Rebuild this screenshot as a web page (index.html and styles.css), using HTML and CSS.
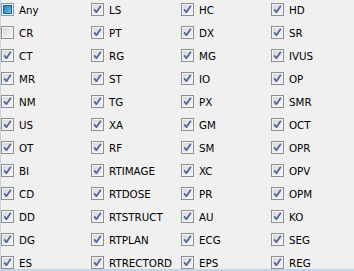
FILE: index.html
```html
<!DOCTYPE html>
<html>
<head>
<meta charset="utf-8">
<link rel="stylesheet" href="styles.css">
</head>
<body>
<svg class="defs" width="0" height="0" aria-hidden="true">
  <defs>
    <linearGradient id="boxg" x1="0" y1="0" x2="1" y2="1">
      <stop offset="0" stop-color="#d6d6d6"/>
      <stop offset="1" stop-color="#f8f8f8"/>
    </linearGradient>
    <linearGradient id="indg" x1="0" y1="0" x2="1" y2="1">
      <stop offset="0" stop-color="#2a8ac8"/>
      <stop offset="0.5" stop-color="#3d9fd8"/>
      <stop offset="1" stop-color="#74c4ec"/>
    </linearGradient>
    <symbol id="cb-on" viewBox="0 0 13 13">
      <rect x="0.5" y="0.5" width="12" height="12" fill="#f4f4f4" stroke="#8e8f8f"/>
      <rect x="1.5" y="1.5" width="10" height="10" fill="url(#boxg)" stroke="#f4f4f4"/>
      <path d="M3.2 6.4 L5.4 9.2 L9.8 2.8" fill="none" stroke="#4c61a0" stroke-width="1.7" stroke-linejoin="round"/>
    </symbol>
    <symbol id="cb-off" viewBox="0 0 13 13">
      <rect x="0.5" y="0.5" width="12" height="12" fill="#f4f4f4" stroke="#8e8f8f"/>
      <rect x="1.5" y="1.5" width="10" height="10" fill="url(#boxg)" stroke="#f4f4f4"/>
    </symbol>
    <symbol id="cb-ind" viewBox="0 0 13 13">
      <rect x="0.5" y="0.5" width="12" height="12" fill="#f4f4f4" stroke="#8a9aae"/>
      <rect x="1.5" y="1.5" width="10" height="10" fill="#e6eef6" stroke="#f4f4f4"/>
      <rect x="2.5" y="2.5" width="8" height="8" fill="url(#indg)" stroke="#1f5f98"/>
    </symbol>
  </defs>
</svg>
<div class="panel">
  <div class="grid">
    <label class="item"><svg class="cb"><use href="#cb-ind"/></svg><span>Any</span></label>
    <label class="item"><svg class="cb"><use href="#cb-on"/></svg><span>LS</span></label>
    <label class="item"><svg class="cb"><use href="#cb-on"/></svg><span>HC</span></label>
    <label class="item"><svg class="cb"><use href="#cb-on"/></svg><span>HD</span></label>

    <label class="item"><svg class="cb"><use href="#cb-off"/></svg><span>CR</span></label>
    <label class="item"><svg class="cb"><use href="#cb-on"/></svg><span>PT</span></label>
    <label class="item"><svg class="cb"><use href="#cb-on"/></svg><span>DX</span></label>
    <label class="item"><svg class="cb"><use href="#cb-on"/></svg><span>SR</span></label>

    <label class="item"><svg class="cb"><use href="#cb-on"/></svg><span>CT</span></label>
    <label class="item"><svg class="cb"><use href="#cb-on"/></svg><span>RG</span></label>
    <label class="item"><svg class="cb"><use href="#cb-on"/></svg><span>MG</span></label>
    <label class="item"><svg class="cb"><use href="#cb-on"/></svg><span>IVUS</span></label>

    <label class="item"><svg class="cb"><use href="#cb-on"/></svg><span>MR</span></label>
    <label class="item"><svg class="cb"><use href="#cb-on"/></svg><span>ST</span></label>
    <label class="item"><svg class="cb"><use href="#cb-on"/></svg><span>IO</span></label>
    <label class="item"><svg class="cb"><use href="#cb-on"/></svg><span>OP</span></label>

    <label class="item"><svg class="cb"><use href="#cb-on"/></svg><span>NM</span></label>
    <label class="item"><svg class="cb"><use href="#cb-on"/></svg><span>TG</span></label>
    <label class="item"><svg class="cb"><use href="#cb-on"/></svg><span>PX</span></label>
    <label class="item"><svg class="cb"><use href="#cb-on"/></svg><span>SMR</span></label>

    <label class="item"><svg class="cb"><use href="#cb-on"/></svg><span>US</span></label>
    <label class="item"><svg class="cb"><use href="#cb-on"/></svg><span>XA</span></label>
    <label class="item"><svg class="cb"><use href="#cb-on"/></svg><span>GM</span></label>
    <label class="item"><svg class="cb"><use href="#cb-on"/></svg><span>OCT</span></label>

    <label class="item"><svg class="cb"><use href="#cb-on"/></svg><span>OT</span></label>
    <label class="item"><svg class="cb"><use href="#cb-on"/></svg><span>RF</span></label>
    <label class="item"><svg class="cb"><use href="#cb-on"/></svg><span>SM</span></label>
    <label class="item"><svg class="cb"><use href="#cb-on"/></svg><span>OPR</span></label>

    <label class="item"><svg class="cb"><use href="#cb-on"/></svg><span>BI</span></label>
    <label class="item"><svg class="cb"><use href="#cb-on"/></svg><span>RTIMAGE</span></label>
    <label class="item"><svg class="cb"><use href="#cb-on"/></svg><span>XC</span></label>
    <label class="item"><svg class="cb"><use href="#cb-on"/></svg><span>OPV</span></label>

    <label class="item"><svg class="cb"><use href="#cb-on"/></svg><span>CD</span></label>
    <label class="item"><svg class="cb"><use href="#cb-on"/></svg><span>RTDOSE</span></label>
    <label class="item"><svg class="cb"><use href="#cb-on"/></svg><span>PR</span></label>
    <label class="item"><svg class="cb"><use href="#cb-on"/></svg><span>OPM</span></label>

    <label class="item"><svg class="cb"><use href="#cb-on"/></svg><span>DD</span></label>
    <label class="item"><svg class="cb"><use href="#cb-on"/></svg><span>RTSTRUCT</span></label>
    <label class="item"><svg class="cb"><use href="#cb-on"/></svg><span>AU</span></label>
    <label class="item"><svg class="cb"><use href="#cb-on"/></svg><span>KO</span></label>

    <label class="item"><svg class="cb"><use href="#cb-on"/></svg><span>DG</span></label>
    <label class="item"><svg class="cb"><use href="#cb-on"/></svg><span>RTPLAN</span></label>
    <label class="item"><svg class="cb"><use href="#cb-on"/></svg><span>ECG</span></label>
    <label class="item"><svg class="cb"><use href="#cb-on"/></svg><span>SEG</span></label>

    <label class="item"><svg class="cb"><use href="#cb-on"/></svg><span>ES</span></label>
    <label class="item"><svg class="cb"><use href="#cb-on"/></svg><span>RTRECTORD</span></label>
    <label class="item"><svg class="cb"><use href="#cb-on"/></svg><span>EPS</span></label>
    <label class="item"><svg class="cb"><use href="#cb-on"/></svg><span>REG</span></label>
  </div>
</div>
</body>
</html>
```
FILE: styles.css
```css
html, body {
  margin: 0;
  padding: 0;
  background: #f0f0f0;
}
.defs {
  position: absolute;
  width: 0;
  height: 0;
}
.panel {
  width: 353px;
  height: 269px;
  border-left: 1px solid #c0d4ec;
  border-bottom: 2px solid #c0d4ec;
  overflow: hidden;
  background: #f0f0f0;
}
.grid {
  display: grid;
  grid-template-columns: repeat(4, 90px);
  grid-auto-rows: 13px;
  row-gap: 10px;
  padding-top: 3px;
  padding-left: 0;
}
.item {
  display: flex;
  align-items: center;
  gap: 5px;
  height: 13px;
  font-family: "DejaVu Sans", sans-serif;
  font-size: 10.3px;
  color: #000;
  white-space: nowrap;
}
.cb {
  width: 13px;
  height: 13px;
  flex: none;
}
```
